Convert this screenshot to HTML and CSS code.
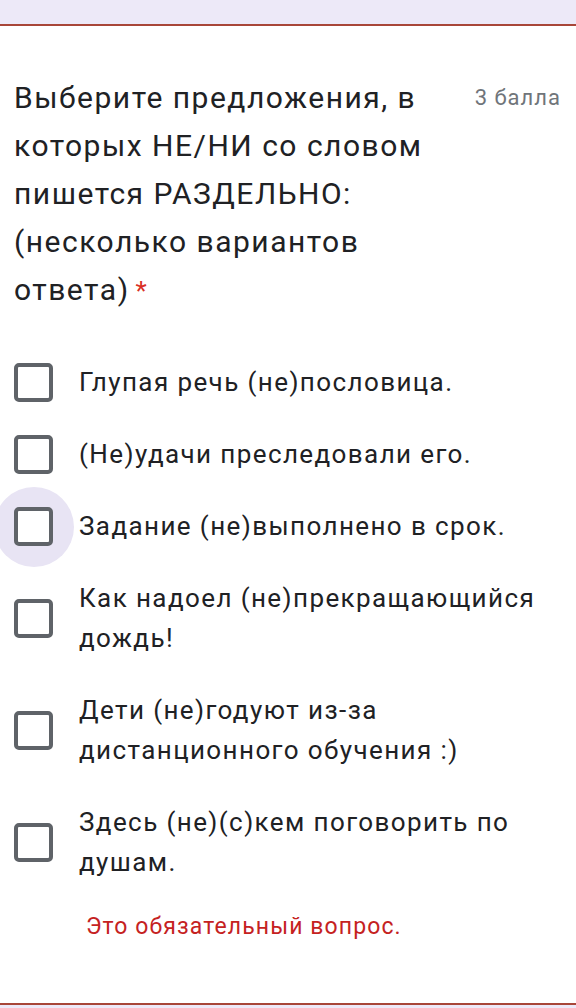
FILE: index.html
```html
<!DOCTYPE html>
<html lang="ru">
<head>
<meta charset="utf-8">
<title>Вопрос</title>
<link rel="stylesheet" href="styles.css">
</head>
<body>
<div class="card">
  <div class="header">
    <div class="title">Выберите предложения, в которых НЕ/НИ со словом пишется РАЗДЕЛЬНО: (несколько вариантов ответа)<span class="req">*</span></div>
    <div class="points">3 балла</div>
  </div>
  <div class="options">
    <div class="option"><span class="box"></span><span class="label">Глупая речь (не)пословица.</span></div>
    <div class="option"><span class="box"></span><span class="label">(Не)удачи преследовали его.</span></div>
    <div class="option"><span class="box focus"></span><span class="label">Задание (не)выполнено в срок.</span></div>
    <div class="option"><span class="box"></span><span class="label">Как надоел (не)прекращающийся дождь!</span></div>
    <div class="option"><span class="box"></span><span class="label">Дети (не)годуют из-за дистанционного обучения :)</span></div>
    <div class="option"><span class="box"></span><span class="label">Здесь (не)(с)кем поговорить по душам.</span></div>
  </div>
  <div class="error">Это обязательный вопрос.</div>
</div>
</body>
</html>
```
FILE: styles.css
```css
html, body {
  margin: 0;
  padding: 0;
}
body {
  background: #ede9f8;
  font-family: Roboto, "Noto Sans", sans-serif;
  color: #202124;
  height: 1008px;
  overflow: hidden;
}
.card {
  position: relative;
  z-index: 0;
  margin-top: 24px;
  background: #ffffff;
  border-top: 2px solid #a84639;
  border-bottom: 2px solid #a84639;
  padding: 48px 15px 60px 14px;
}
.header {
  display: flex;
  align-items: flex-start;
}
.title {
  flex: 1;
  font-size: 30px;
  letter-spacing: 1.5px;
  line-height: 48px;
  color: #202124;
}
.req {
  display: inline-block;
  margin-left: 6px;
  font-size: 26px;
  color: #d93025;
  letter-spacing: 0;
}
.points {
  margin-left: 26px;
  font-size: 22px;
  letter-spacing: 1px;
  line-height: 48px;
  color: #70757a;
  white-space: nowrap;
}
.options {
  margin-top: 47px;
  display: flex;
  flex-direction: column;
  gap: 32px;
}
.option {
  display: flex;
  align-items: center;
}
.box {
  position: relative;
  flex: none;
  width: 31px;
  height: 31px;
  border: 4px solid #5f6368;
  border-radius: 5px;
  margin-right: 26px;
  background: #ffffff;
}
.box.focus::before {
  content: "";
  position: absolute;
  left: -24px;
  top: -24px;
  width: 80px;
  height: 80px;
  border-radius: 50%;
  background: #e8e4f4;
  z-index: -1;
}
.label {
  font-size: 26px;
  letter-spacing: 1.4px;
  line-height: 40px;
  color: #202124;
}
.error {
  margin-top: 29px;
  margin-left: 72px;
  font-size: 23px;
  letter-spacing: 1.1px;
  line-height: 32px;
  color: #c5221f;
}
```
